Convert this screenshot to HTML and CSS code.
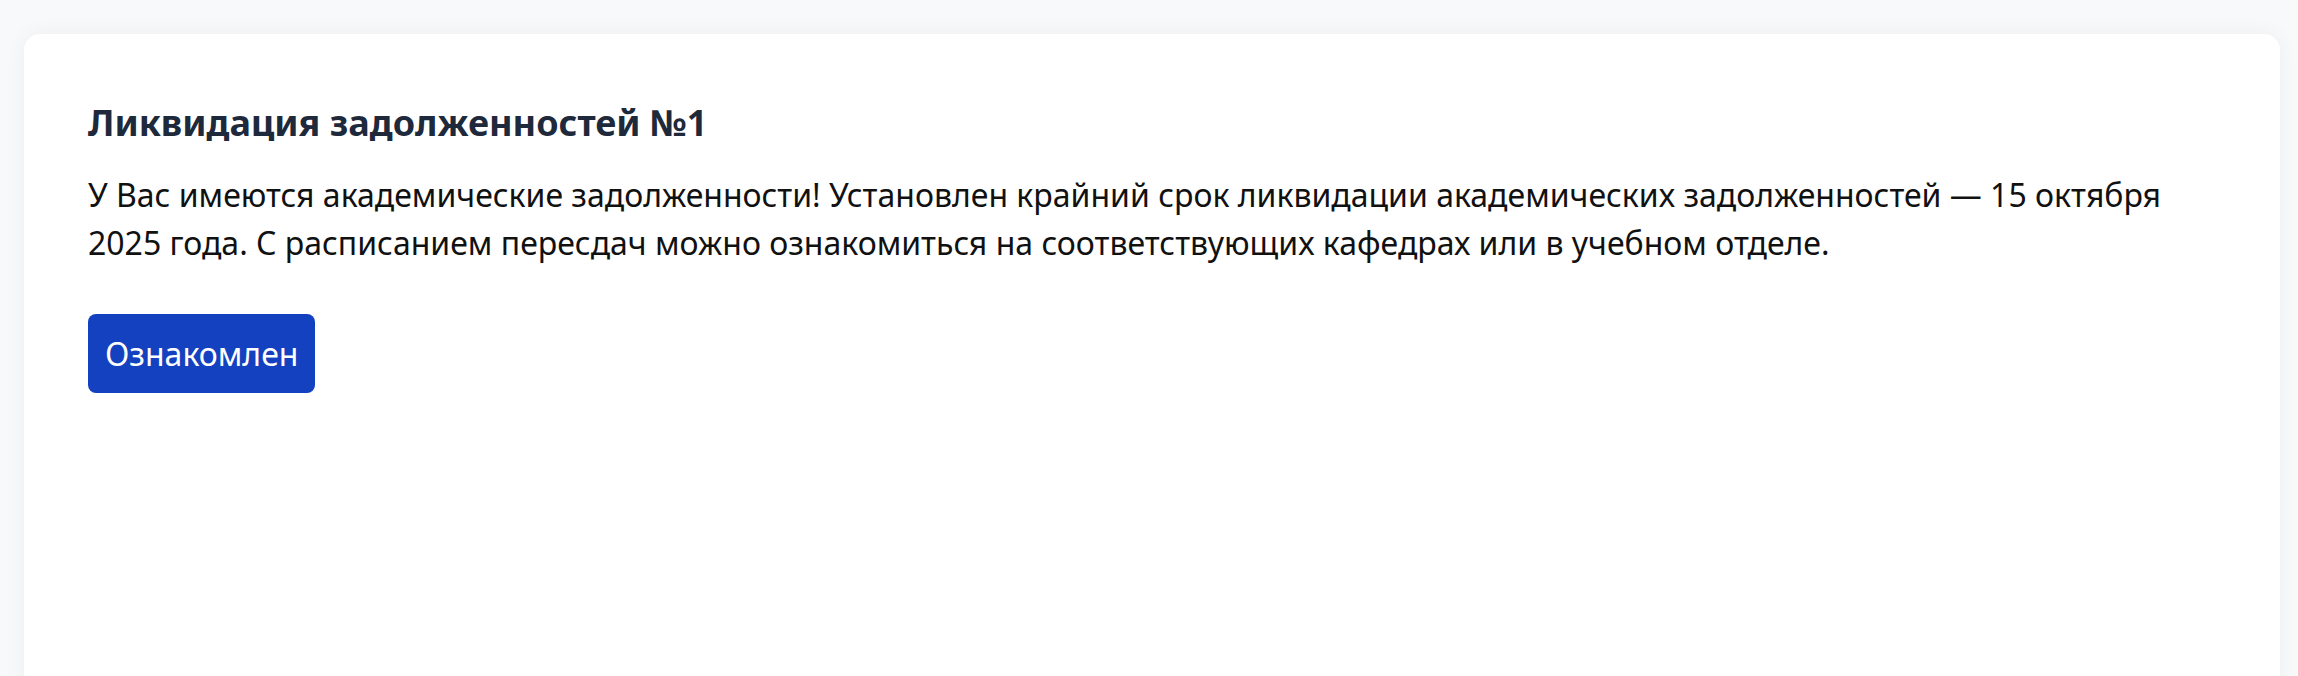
FILE: index.html
```html
<!DOCTYPE html>
<html lang="ru">
<head>
<meta charset="utf-8">
<title>Ликвидация задолженностей</title>
<link rel="stylesheet" href="styles.css">
</head>
<body>
<main class="page">
  <section class="card">
    <h1 class="card-title">Ликвидация задолженностей №1</h1>
    <p class="card-text">У Вас имеются академические задолженности! Установлен крайний срок ликвидации академических задолженностей — 15 октября 2025 года. С расписанием пересдач можно ознакомиться на соответствующих кафедрах или в учебном отделе.</p>
    <button class="btn-primary" type="button">Ознакомлен</button>
  </section>
</main>
</body>
</html>
```

FILE: styles.css
```css
html, body {
  margin: 0;
  padding: 0;
}

body {
  background: #f8f9fb;
  font-family: "Noto Sans", "Open Sans", sans-serif;
  overflow: hidden;
}

.page {
  padding: 34px 18px 0 24px;
}

.card {
  background: #ffffff;
  border-radius: 16px;
  box-shadow: 0 0 22px rgba(15, 23, 42, 0.05);
  padding: 63px 64px 64px 64px;
  min-height: 700px;
}

.card-title {
  margin: 0;
  font-size: 36px;
  line-height: 52px;
  font-weight: 700;
  color: #1e293b;
}

.card-text {
  margin: 22px 0 0 0;
  font-size: 32px;
  line-height: 48px;
  color: #111111;
}

.btn-primary {
  display: block;
  margin-top: 47px;
  height: 79px;
  padding: 0 17px;
  border: none;
  border-radius: 8px;
  background: #1441c0;
  color: #ffffff;
  font-family: inherit;
  font-size: 32px;
}
```
